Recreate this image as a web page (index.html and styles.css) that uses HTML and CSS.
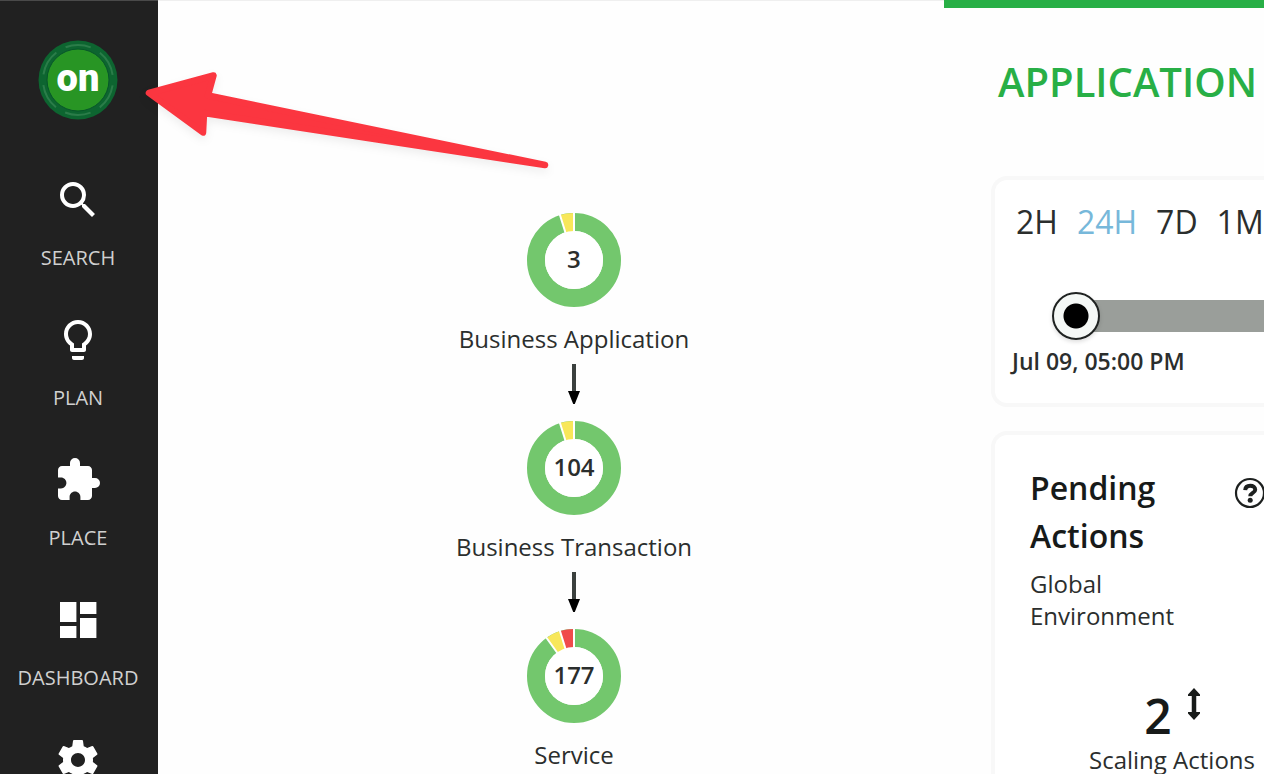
FILE: index.html
```html
<!DOCTYPE html>
<html lang="en">
<head>
<meta charset="utf-8">
<title>Application</title>
<link rel="stylesheet" href="styles.css">
</head>
<body>
<div class="app">
  <nav class="sidebar" aria-label="Main">
    <a class="logo" href="#" aria-label="Home">
      <svg class="logo-ring" viewBox="0 0 80 80" aria-hidden="true">
        <circle cx="40" cy="40" r="39.5" fill="#0d6530"/>
        <circle cx="40" cy="40" r="35" fill="none" stroke="#3f8c5a" stroke-width="2" stroke-dasharray="26 10.65" stroke-dashoffset="13" transform="rotate(-90 40 40)" opacity=".6"/>
        <circle cx="40" cy="40" r="31" fill="#289524" stroke="#07552a" stroke-width="1"/>
      </svg>
      <span class="logo-text">on</span>
    </a>
    <a class="nav-item" href="#">
      <svg class="nav-icon" viewBox="0 0 24 24" aria-hidden="true"><path d="M15.5 14h-.79l-.28-.27A6.471 6.471 0 0 0 16 9.5 6.5 6.5 0 1 0 9.5 16c1.61 0 3.09-.59 4.23-1.57l.27.28v.79l5 4.99L20.49 19l-4.99-5zm-6 0C7.01 14 5 11.99 5 9.500S7.01 5 9.500 5 14 7.010 14 9.500 11.99 14 9.500 14z"/></svg>
      <span class="nav-label">SEARCH</span>
    </a>
    <a class="nav-item" href="#">
      <svg class="nav-icon" viewBox="0 0 24 24" aria-hidden="true"><path d="M9 21c0 .55.45 1 1 1h4c.55 0 1-.45 1-1v-1H9v1zm3-19C8.140 2 5 5.140 5 9c0 2.380 1.190 4.470 3 5.740V17c0 .55.45 1 1 1h6c.55 0 1-.45 1-1v-2.260c1.810-1.270 3-3.360 3-5.740 0-3.860-3.140-7-7-7zm2.850 11.100l-.85.600V16h-4v-2.300l-.85-.600A4.997 4.997 0 0 1 7 9c0-2.760 2.240-5 5-5s5 2.240 5 5c0 1.630-.80 3.160-2.150 4.100z"/></svg>
      <span class="nav-label">PLAN</span>
    </a>
    <a class="nav-item" href="#">
      <svg class="nav-icon" viewBox="0 0 24 24" aria-hidden="true"><path d="M20.500 11H19V7c0-1.100-.90-2-2-2h-4V3.500a2.500 2.500 0 0 0-5 0V5H4c-1.100 0-1.990.90-1.990 2v3.800H3.500c1.490 0 2.700 1.210 2.700 2.700s-1.210 2.700-2.700 2.700H2V20c0 1.100.90 2 2 2h3.800v-1.500c0-1.490 1.210-2.700 2.700-2.700s2.700 1.210 2.700 2.700V22H17c1.100 0 2-.90 2-2v-4h1.500a2.500 2.500 0 0 0 0-5z"/></svg>
      <span class="nav-label">PLACE</span>
    </a>
    <a class="nav-item" href="#">
      <svg class="nav-icon" viewBox="0 0 24 24" aria-hidden="true"><path d="M3 3h8.200v10H3zM3 15h8.200v6H3zM13 3h8.200v6H13zM13 11h8.200v10H13z"/></svg>
      <span class="nav-label">DASHBOARD</span>
    </a>
    <a class="nav-item" href="#" aria-label="Settings">
      <svg class="nav-icon" viewBox="0 0 24 24" aria-hidden="true"><path d="M19.430 12.980c.04-.32.070-.64.070-.98s-.03-.66-.07-.98l2.110-1.650c.19-.15.240-.42.120-.64l-2-3.460c-.12-.22-.39-.30-.61-.22l-2.490 1c-.52-.40-1.080-.73-1.690-.98l-.38-2.650A.488.488 0 0 0 14 2h-4c-.25 0-.46.180-.49.420l-.38 2.650c-.61.250-1.170.590-1.690.980l-2.490-1c-.23-.09-.49 0-.61.220l-2 3.460c-.13.220-.07.490.120.640l2.110 1.650c-.04.320-.07.650-.07.980s.03.660.070.980l-2.110 1.650c-.19.150-.24.420-.12.640l2 3.460c.12.220.390.300.610.220l2.490-1c.52.400 1.080.730 1.690.980l.38 2.650c.03.240.240.420.490.420h4c.25 0 .46-.18.490-.42l.38-2.650c.61-.25 1.170-.59 1.690-.98l2.490 1c.23.090.490 0 .61-.22l2-3.460c.12-.22.070-.49-.12-.64l-2.110-1.650zM12 15.500c-1.930 0-3.500-1.570-3.500-3.500s1.570-3.500 3.500-3.500 3.500 1.570 3.500 3.500-1.570 3.500-3.500 3.500z"/></svg>
    </a>
  </nav>

  <main class="supply-chain">
    <div class="node">
      <div class="donut">
        <svg class="ring" viewBox="-48 -48 96 96" aria-hidden="true">
          <circle r="38" fill="none" stroke="#73c76d" stroke-width="18"/>
          <path d="M0 0V-47A47 47 0 0 0-14-44.900Z" fill="#f8e75a"/>
          <path d="M0 0V-50M0 0-14.900-47.700" stroke="#fff" stroke-width="2"/>
          <circle r="29" fill="#fff"/>
        </svg>
        <span class="count">3</span>
      </div>
      <span class="node-name">Business Application</span>
    </div>
    <svg class="link-arrow" viewBox="0 0 12 40" aria-hidden="true"><path d="M6 1v30" stroke="#3b403e" stroke-width="4"/><path d="M0 28h12L6.800 41H5.200z"/></svg>
    <div class="node">
      <div class="donut">
        <svg class="ring" viewBox="-48 -48 96 96" aria-hidden="true">
          <circle r="38" fill="none" stroke="#73c76d" stroke-width="18"/>
          <path d="M0 0V-47A47 47 0 0 0-14-44.900Z" fill="#f8e75a"/>
          <path d="M0 0V-50M0 0-14.900-47.700" stroke="#fff" stroke-width="2"/>
          <circle r="29" fill="#fff"/>
        </svg>
        <span class="count">104</span>
      </div>
      <span class="node-name">Business Transaction</span>
    </div>
    <svg class="link-arrow" viewBox="0 0 12 40" aria-hidden="true"><path d="M6 1v30" stroke="#3b403e" stroke-width="4"/><path d="M0 28h12L6.800 41H5.200z"/></svg>
    <div class="node">
      <div class="donut">
        <svg class="ring" viewBox="-48 -48 96 96" aria-hidden="true">
          <circle r="38" fill="none" stroke="#73c76d" stroke-width="18"/>
          <path d="M0 0-14-44.900A47 47 0 0 0-27.500-38.100Z" fill="#f8e75a"/>
          <path d="M0 0V-47A47 47 0 0 0-14-44.900Z" fill="#f04b4b"/>
          <path d="M0 0V-50M0 0-14.900-47.700M0 0-29.200-40.500" stroke="#fff" stroke-width="2"/>
          <circle r="29" fill="#fff"/>
        </svg>
        <span class="count">177</span>
      </div>
      <span class="node-name">Service</span>
    </div>
  </main>

  <section class="details">
    <h1 class="title">APPLICATION</h1>
    <div class="card time-card">
      <div class="ranges">
        <button class="range" type="button">2H</button>
        <button class="range active" type="button">24H</button>
        <button class="range" type="button">7D</button>
        <button class="range" type="button">1M</button>
      </div>
      <input class="slider" id="time" type="range" min="0" max="100" value="0">
      <label class="time-label" for="time">Jul 09, 05:00 PM</label>
    </div>
    <div class="card actions-card">
      <div class="card-head">
        <h2 class="card-title">Pending Actions</h2>
        <button class="help" type="button" aria-label="Help">
          <svg class="help-icon" viewBox="0 0 32 32" aria-hidden="true"><circle cx="16" cy="16" r="14" fill="none" stroke="#1d201f" stroke-width="2.200"/><path d="M11.200 13.200C11.400 10.200 13.200 8.800 16.200 8.800C19.200 8.800 21.200 10.300 21.200 12.700C21.200 16 16.300 15.900 16.300 19.200" fill="none" stroke="#1d201f" stroke-width="4"/><circle cx="16.200" cy="23.300" r="2.500" fill="#1d201f"/></svg>
        </button>
      </div>
      <p class="scope">Global<br>Environment</p>
      <div class="metric">
        <div class="metric-value">
          <span class="metric-number">2</span>
          <svg class="scale-icon" viewBox="0 0 12 32" aria-hidden="true"><path d="M6 5v22" stroke="#171a19" stroke-width="4.500"/><path d="M6 0 12 6.500V8H0V6.500zM6 32 12 25.500V24H0v1.500z" fill="#171a19"/></svg>
        </div>
        <span class="metric-name">Scaling Actions</span>
      </div>
    </div>
  </section>

  <svg class="pointer" viewBox="0 0 420 130" aria-hidden="true"><path d="M9 43 73.500 25.500 68 45.500 405 115 64 63 63 82.500Z" fill="#fb3640" stroke="#fb3640" stroke-width="6.500" stroke-linejoin="round"/></svg>
</div>
</body>
</html>
```
FILE: styles.css
```css
* {
  box-sizing: border-box;
}

body {
  margin: 0;
  font-family: "Open Sans", "Noto Sans", sans-serif;
  color: #2b2e2d;
  background: #fefefe;
}

.app {
  position: relative;
  display: grid;
  grid-template-columns: 158px 1fr 320px;
  height: 100vh;
  overflow: hidden;
}

.sidebar {
  display: flex;
  flex-direction: column;
  align-items: center;
  gap: 44px;
  padding: 39px 2px 0 0;
  background: #212121;
  border-top: 1px solid #4a4a4a;
  min-height: 0;
}

.logo {
  display: grid;
  place-items: center;
  flex: none;
  margin-bottom: 12px;
  color: #fff;
  text-decoration: none;
}

.logo-ring,
.logo-text {
  grid-area: 1 / 1;
}

.logo-ring {
  width: 80px;
  height: 80px;
}

.logo-text {
  font-family: Roboto, sans-serif;
  font-size: 38px;
  font-weight: 900;
  line-height: 48px;
  padding-bottom: 4px;
}

.nav-item {
  display: flex;
  flex-direction: column;
  align-items: center;
  gap: 20px;
  flex: none;
  color: #d0d0d0;
  text-decoration: none;
}

.nav-icon {
  width: 48px;
  height: 48px;
  fill: #fff;
}

.nav-label {
  font-size: 20px;
  line-height: 28px;
}

.supply-chain {
  display: flex;
  flex-direction: column;
  align-items: center;
  padding: 211px 0 0 46px;
  border-top: 1px solid #efefef;
  min-height: 0;
}

.node {
  display: flex;
  flex-direction: column;
  align-items: center;
  gap: 15px;
}

.donut {
  display: grid;
  place-items: center;
}

.ring,
.count {
  grid-area: 1 / 1;
}

.ring {
  width: 96px;
  height: 96px;
}

.count {
  padding-bottom: 2px;
  font-size: 24px;
  font-weight: 600;
  line-height: 32px;
}

.node-name {
  font-size: 24px;
  line-height: 32px;
}

.link-arrow {
  flex: none;
  width: 12px;
  height: 40px;
  margin: 8px 0 17px;
  overflow: visible;
}

.details {
  padding-left: 47px;
  border-top: 8px solid #28af46;
  min-height: 0;
}

.title {
  margin: 0;
  padding: 44px 0 64px 7px;
  font-size: 40px;
  font-weight: 600;
  line-height: 60px;
  color: #28af46;
}

.card {
  border: 4px solid #f8f8f8;
  border-right: 0;
  border-radius: 16px 0 0 16px;
  background: #fff;
}

.time-card {
  padding: 20px 0 28px 17px;
  margin-bottom: 24px;
}

.ranges {
  display: flex;
  gap: 19px;
  padding-left: 4px;
}

.range {
  flex: none;
  padding: 0;
  border: 0;
  background: none;
  font: inherit;
  font-size: 32px;
  line-height: 44px;
  color: #2b2e2d;
}

.range.active {
  color: #77b8da;
}

.slider {
  display: block;
  appearance: none;
  width: calc(100% - 40px);
  height: 48px;
  margin: 48px 0 7px 40px;
  background: linear-gradient(#9a9e9a, #9a9e9a) 24px 8px / 100% 32px no-repeat;
}

.slider::-webkit-slider-thumb {
  appearance: none;
  width: 48px;
  height: 48px;
  border: 2px solid #1f2221;
  border-radius: 50%;
  background: radial-gradient(circle, #000 12px, #f5f8f6 13px);
  box-shadow: 0 2px 4px #0002;
}

.time-label {
  display: block;
  font-size: 23px;
  font-weight: 600;
  line-height: 28px;
}

.actions-card {
  padding: 29px 0 40px 35px;
}

.card-head {
  display: flex;
  justify-content: space-between;
  align-items: flex-start;
}

.card-title {
  width: 140px;
  margin: 0;
  font-size: 32px;
  font-weight: 600;
  line-height: 48px;
  color: #171a19;
}

.help {
  flex: none;
  margin: 13px -2px 0 0;
  padding: 0;
  border: 0;
  background: none;
}

.help-icon {
  display: block;
  width: 32px;
  height: 32px;
}

.scope {
  margin: 8px 0 52px;
  font-size: 24px;
  line-height: 32px;
}

.metric {
  display: flex;
  flex-direction: column;
  align-items: center;
  padding-left: 50px;
}

.metric-value {
  display: flex;
  gap: 16px;
}

.metric-number {
  font-size: 48px;
  font-weight: 600;
  line-height: 64px;
  color: #171a19;
}

.scale-icon {
  width: 12px;
  height: 32px;
  margin-top: 4px;
}

.metric-name {
  margin-top: -4px;
  font-size: 24px;
  line-height: 32px;
  white-space: nowrap;
}

.pointer {
  position: absolute;
  left: 140px;
  top: 50px;
  width: 420px;
  height: 130px;
  filter: drop-shadow(0 4px 4px #0001);
}
```
